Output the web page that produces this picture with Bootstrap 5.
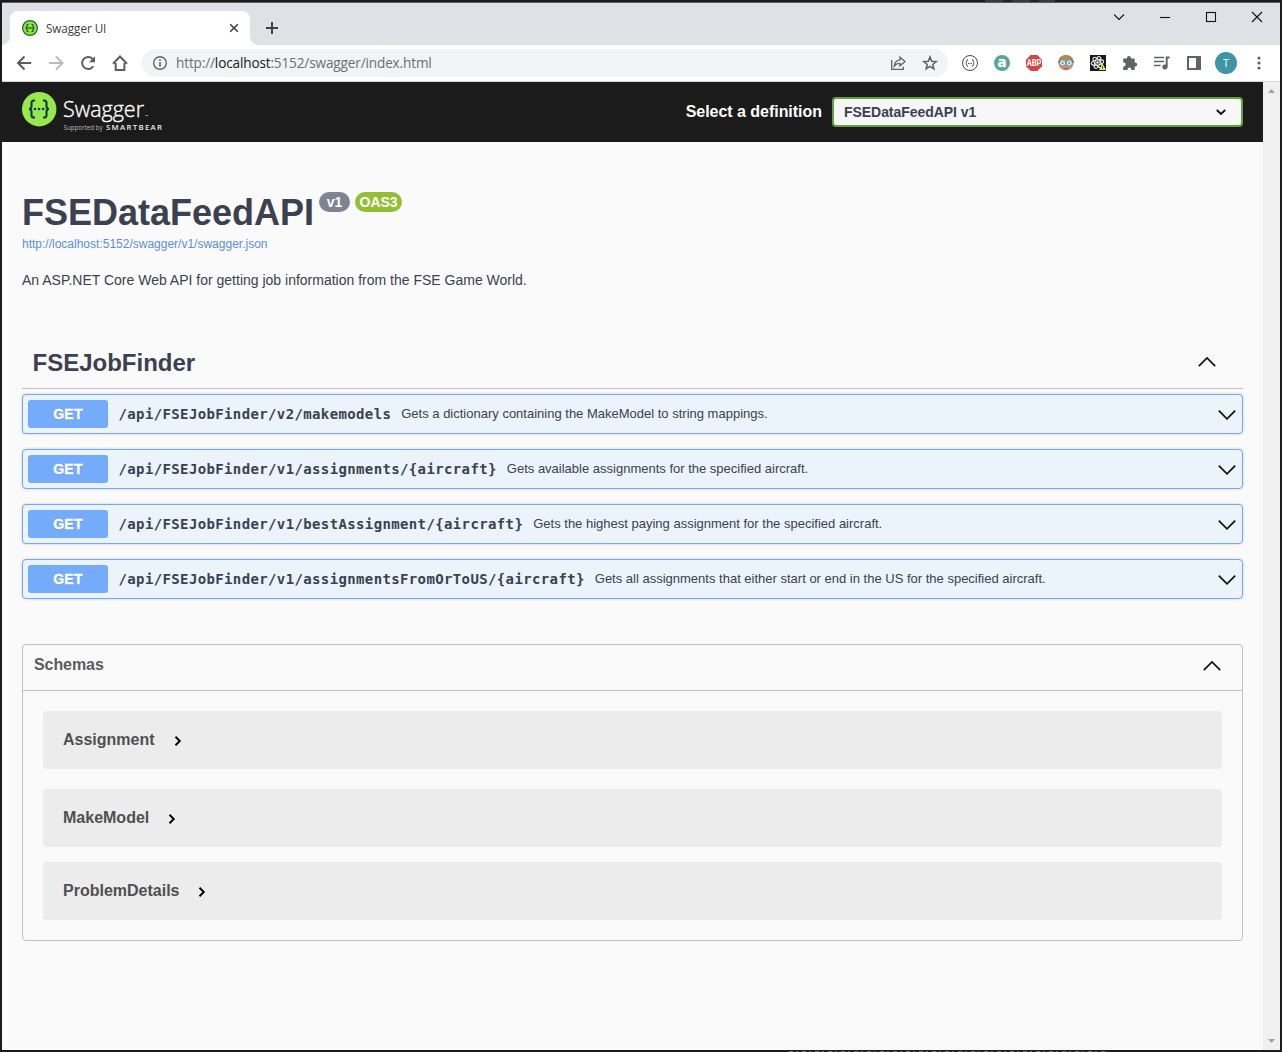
<!DOCTYPE html>
<html lang="en">
<head>
<meta charset="utf-8">
<title>Swagger UI</title>
<meta name="viewport" content="width=device-width, initial-scale=1">
<link href="https://cdn.jsdelivr.net/npm/bootstrap@5.3.0/dist/css/bootstrap.min.css" rel="stylesheet">
<style>
body{background:#1c1c1e;height:1052px;overflow:hidden;font-family:"Liberation Sans",Arial,sans-serif;color:#3b4151;font-size:14px;line-height:1.2}
svg{display:block;flex:none}
.desktop{width:1282px;height:1052px;padding:2px;position:relative}
/* slivers of the windows behind the browser */
.behind-top,.behind-bottom{position:absolute;height:1px}
.behind-top{left:985px;top:0;width:70px;height:2px;background:repeating-linear-gradient(90deg,#3a3a3c 0 18px,#222 18px 27px)}
.behind-bottom{left:789px;top:1051px;width:319px;background:repeating-linear-gradient(90deg,#777 0 4px,#2a2c30 4px 7px,#5d6b70 7px 9px,#222 9px 13px)}
.browser{height:1048px;background:#fafafa}
.tabstrip{height:43px;background:#dee1e6;border-top:1px solid #5d5e61;font-family:"Open Sans","Noto Sans",sans-serif}
.tab-active{width:240px;height:34px;margin:8px 0 0 8px;background:#fff;border-radius:8px 8px 0 0;padding:0 11px 0 12px;position:relative}
.tab-active::before,.tab-active::after{content:"";position:absolute;bottom:0;width:8px;height:8px}
.tab-active::before{left:-8px;background:radial-gradient(circle at 0 0,transparent 7.5px,#fff 8px)}
.tab-active::after{right:-8px;background:radial-gradient(circle at 100% 0,transparent 7.5px,#fff 8px)}
.tab-name{font-size:11.7px;color:#3c4043;margin-left:8px;letter-spacing:-.05px}
.winctl{margin:7px 16px 0 0}
.toolbar{height:37px;background:#fff;border-bottom:1px solid #d5d7da;padding:0 14px 0 14px;font-family:"Open Sans","Noto Sans",sans-serif}
.omnibox{width:806px;height:28px;border-radius:14px;background:#f1f3f4;margin-left:14px;padding:0 9px 0 10px}
.url{font-size:13.6px;letter-spacing:-.15px;color:#6b6f74;margin-left:8px;white-space:nowrap}
.url b{font-weight:400;color:#202124}
.avatar{width:22px;height:22px;background:#3d95a6;color:#fff;font-size:11px}
.viewport{height:968px}
.page{width:1261px}
.sb{width:17px;background:#f0f0f0;padding:7px 0 7px}
.topbar{height:60px;background:#1b1b1b;padding:0 20px}
.logo{font-family:"Open Sans",sans-serif}
.def-label{font-size:16px;font-weight:700;color:#fff;margin-right:10px;line-height:18px;letter-spacing:-.03px}
.def-select{width:411px;height:30px;border:2px solid #62a03f;border-radius:4px;background:#f7f7f7;font-size:14px;font-weight:700;padding:0 15px 0 10px;letter-spacing:-.05px}
.wrap{padding:0 20px}
.api-title{font-size:36px;font-weight:700;line-height:41px;height:41px;margin:50px 0 0;white-space:nowrap}
.pill{height:20px;border-radius:20px;color:#fff;font-weight:700;font-size:14px;line-height:20px;text-align:center}
.v1{width:31px;background:#7d8492;margin-left:5px}
.oas{width:47px;background:#93bf35;margin-left:5px}
.spec{font-size:12px;line-height:14px;color:#5d8ddc;text-decoration:none;margin-top:4px}
.desc{font-size:14px;line-height:16px;margin:21px 0 0}
.tag{height:50px;margin-top:51px;border-bottom:1px solid #bebfc4;padding:0 26px 2px 10.5px}
.tag h3{font-size:24px;font-weight:700;line-height:28px;margin:0}
.tag svg{margin-bottom:2px}
.ops{padding-top:5px;gap:15px}
.op{height:40px;border:1px solid #73aaf8;border-radius:4px;background:#ebf3fb;box-shadow:0 0 3px rgba(0,0,0,.19);padding:0 5px 0 5px}
.op svg{margin-top:2px}
.verb{width:80px;height:28px;background:#74abfa;border-radius:3px;color:#fff;font-size:14px;font-weight:700;text-align:center;line-height:28px;text-shadow:0 1px 0 rgba(0,0,0,.1);letter-spacing:.3px;-webkit-text-stroke:.3px #fff}
.path{font-family:"DejaVu Sans Mono","Liberation Mono",monospace;font-weight:700;font-size:14px;letter-spacing:.369px;line-height:18px;margin-left:10.5px;white-space:nowrap}
.sum{font-size:13px;line-height:16px;margin-left:10px;margin-top:-1px;white-space:nowrap}
.models{margin-top:45px;height:297px;border:1px solid #bfc0c4;border-radius:4px}
.models-head{height:46px;border-bottom:1px solid #bfc0c4;padding:0 20px 4px 11px}
.models-head h4{font-size:16px;font-weight:700;line-height:18px;margin:0 0 2px;color:#5a5b5f;letter-spacing:-.08px}
.model-list{padding:20px}
.model-row{height:58px;background:#ececec;border-radius:4px;padding:0 20px;font-size:16px;font-weight:700;color:#505050;line-height:18px}
.model-row svg{margin:2px 0 0 19px}
</style>
</head>
<body>
<svg width="0" height="0" class="position-absolute">
  <symbol id="down" viewBox="0 0 20 12"><path d="M1.800 1.700 10 9.800l8.200-8.100" fill="none" stroke="#111" stroke-width="1.700"/></symbol>
  <symbol id="up" viewBox="0 0 20 12"><path d="M1.800 10.100 10 2l8.200 8.100" fill="none" stroke="#111" stroke-width="1.700"/></symbol>
  <symbol id="right" viewBox="0 0 8 10"><path d="M1.500 .800 5.800 5 1.500 9.200" fill="none" stroke="#000" stroke-width="1.900"/></symbol>
  <symbol id="braces" viewBox="0 0 34 34"><path d="M13 8.500h-1.200c-1.700 0-2.300 1-2.300 2.600v3c0 1.700-.8 2.900-2.500 2.900 1.700 0 2.500 1.200 2.500 2.900v3c0 1.600.6 2.600 2.300 2.600H13M21 8.500h1.200c1.700 0 2.300 1 2.300 2.600v3c0 1.700.8 2.900 2.500 2.900-1.700 0-2.500 1.200-2.500 2.900v3c0 1.600-.6 2.600-2.300 2.600H21" fill="none" stroke="currentColor" stroke-width="2.100"/><g fill="currentColor"><circle cx="12.900" cy="17" r="1.350"/><circle cx="17" cy="17" r="1.350"/><circle cx="21.100" cy="17" r="1.350"/></g></symbol>
</svg>
<div class="desktop">
<div class="behind-top"></div><div class="behind-bottom"></div>
<div class="browser d-flex flex-column">
  <div class="tabstrip d-flex justify-content-between align-items-start">
    <div class="d-flex">
      <div class="tab-active d-flex align-items-center">
        <svg width="16" height="16" viewBox="0 0 16 16" color="#1d3b2b"><circle cx="8" cy="8" r="7.400" fill="#85ea2d" stroke="#2c5a54" stroke-width="1.200"/><path d="M6.600 4.300C4.600 4.300 5 5.300 5 6.500 5 7.400 4.600 8 3.600 8 4.600 8 5 8.600 5 9.500c0 1.200-.4 2.200 1.600 2.200M9.400 4.300c2 0 1.600 1 1.600 2.200 0 .9.400 1.500 1.400 1.500-1 0-1.400.6-1.400 1.500 0 1.200.4 2.200-1.600 2.200M5.500 8h5" fill="none" stroke="currentColor" stroke-width="1.100"/></svg>
        <span class="tab-name">Swagger UI</span>
        <svg class="ms-auto" width="10" height="10" viewBox="0 0 10 10"><path d="M1.200 1.200l7.600 7.600M8.800 1.200 1.200 8.800" stroke="#3c4043" stroke-width="1.600"/></svg>
      </div>
      <svg style="margin:19px 0 0 16px" width="12" height="12" viewBox="0 0 12 12"><path d="M6 0v12M0 6h12" stroke="#3c4043" stroke-width="2"/></svg>
    </div>
    <svg class="winctl" width="150" height="14" viewBox="0 0 150 14" fill="none" stroke="#111" stroke-width="1.100"><path d="M0 4.500 5 9.500 10 4.500"/><path d="M46 7.500h10"/><rect x="92.500" y="2.500" width="9" height="9"/><path d="M138 2l10 10M148 2l-10 10"/></svg>
  </div>

  <div class="toolbar d-flex align-items-center">
    <svg width="112" height="16" viewBox="0 0 112 16" fill="none" stroke="#5b5e63" stroke-width="2">
      <path d="M15.200 8H2.800M8.500 1.500 2 8l6.500 6.500"/>
      <path d="M33 8h12.500M40 1.500 46.500 8 40 14.500" stroke="#b9bbbd"/>
      <path d="M77.200 11.200A6 6 0 1 1 76.400 3.800L78 5.400"/><path d="M79 1.200v6h-6z" fill="#5b5e63" stroke="none"/>
      <path d="M99.700 8v7h8.700V8M97 8.700l7-7.200 7 7.200" />
    </svg>
    <div class="omnibox d-flex align-items-center">
      <svg width="16" height="16" viewBox="0 0 16 16"><circle cx="8" cy="8" r="6.300" fill="none" stroke="#5f6368" stroke-width="1.400"/><path d="M8 7v4.600M8 4.300v1.600" stroke="#5f6368" stroke-width="1.600"/></svg>
      <span class="url">http://<b>localhost</b>:5152/swagger/index.html</span>
      <svg class="ms-auto" width="50" height="16" viewBox="0 0 50 16" fill="none" stroke="#5f6368" stroke-width="1.300"><path d="M2.700 5v9.300h11.600v-2.600"/><path d="M11 2.200 16 6.500 11 10.800V8.300C8.300 8.300 6.500 9.200 5.200 11 5.600 7.500 7.700 5.200 11 4.800z"/><path d="M41 1.900l1.700 4.300 4.500.3-3.500 2.900 1.200 4.500-3.900-2.500-3.900 2.500 1.200-4.500-3.500-2.900 4.500-.3z" stroke-width="1.500"/></svg>
    </div>
    <svg style="margin-left:14px" width="240" height="18" viewBox="0 0 240 18">
      <g fill="none" stroke="#4b4b4b"><circle cx="8" cy="9" r="7.500"/><path d="M6 5.500c-2 0-.8 3.500-2.200 3.500 1.400 0 .2 3.500 2.200 3.500M10 5.500c2 0 .8 3.500 2.200 3.500-1.400 0-.2 3.500-2.200 3.500"/><path d="M6 9.500h4" stroke-dasharray="1 .6"/></g>
      <circle cx="40" cy="9" r="8" fill="#59a598"/><text x="40" y="13.200" text-anchor="middle" font-family="Open Sans" font-weight="700" font-size="15" fill="#fff" stroke="#fff" stroke-width=".4">a</text>
      <path d="M68.700 1h6.600L80 5.700v6.600L75.300 17h-6.600L64 12.300V5.700z" fill="#d04545"/><text x="64.700" y="12.200" font-family="Roboto" font-weight="700" font-size="9" fill="#fff" textLength="14.600" lengthAdjust="spacingAndGlyphs">ABP</text>
      <circle cx="104" cy="9" r="7.600" fill="#c99576"/><path d="M96.400 8C96.500 3 100 1 104 1s7.500 2 7.600 7l-3-2.500h-9z" fill="#a78a58"/><path d="M96 8h16" stroke="#58717e" stroke-width="1.500"/><circle cx="100.700" cy="9" r="3" fill="#d9eff5" stroke="#73949f"/><circle cx="107.300" cy="9" r="3" fill="#d9eff5" stroke="#73949f"/><path d="M100 9h1.500M106.500 9h1.500" stroke="#396c88" stroke-width="1.500"/><path d="M102 14.500h4" stroke="#946152"/>
      <path d="M128 1h16v16h-16z" fill="#181818"/><g fill="none" stroke="#eee" stroke-width="1.100"><ellipse cx="135.500" cy="8.500" rx="6.200" ry="2.600" transform="rotate(-10 135.500 8.500)"/><ellipse cx="135.500" cy="8.500" rx="6.200" ry="2.600" transform="rotate(50 135.500 8.500)"/><ellipse cx="135.500" cy="8.500" rx="6.200" ry="2.600" transform="rotate(110 135.500 8.500)"/></g><circle cx="135.500" cy="8.500" r="1.200" fill="#fff"/><path d="M140.500 9.500l3.500 6.500h-7z" fill="#f1e65b"/><path d="M140.500 12v2.800" stroke="#564d20"/>
      <path d="M161 4.500h3.200V4a2 2 0 0 1 4 0v.5h3.800v4h.5a2 2 0 0 1 0 4h-.5V16h-3.400v-.5a1.900 1.900 0 0 0-3.800 0v.5H160.500v-3.600h.6a1.900 1.900 0 0 0 0-3.800h-.6V4.500z" fill="#5f6368" transform="translate(.7 0)"/>
      <path d="M192 3.500h10M192 7.500h10M192 11.500h6.500" stroke="#5f6368" stroke-width="1.600"/><path d="M204.700 13V3.500h3" fill="none" stroke="#5f6368" stroke-width="1.900"/><circle cx="202.900" cy="13" r="2.500" fill="#5f6368"/>
      <path d="M226 3h12v12h-12z" fill="none" stroke="#5f6368" stroke-width="2"/><path d="M234 2h5v14h-5z" fill="#5f6368"/>
    </svg>
    <div class="avatar rounded-circle d-flex align-items-center justify-content-center flex-shrink-0" style="margin-left:13px">T</div>
    <svg style="margin-left:20px" width="4" height="14" viewBox="0 0 4 14" fill="#5f6368"><circle cx="2" cy="2" r="1.600"/><circle cx="2" cy="7" r="1.600"/><circle cx="2" cy="12" r="1.600"/></svg>
  </div>

  <div class="viewport d-flex">
    <main class="page">
      <header class="topbar d-flex align-items-center">
        <svg class="logo" width="144" height="44" viewBox="0 0 144 44">
          <circle cx="17.200" cy="19.200" r="17.200" fill="#97e84c"/><use href="#braces" x="0" y="2" width="34" height="34" color="#173647"/>
          <text x="41" y="26.500" font-size="22" font-weight="300" fill="#fff" stroke="#fff" stroke-width=".35" textLength="81" lengthAdjust="spacingAndGlyphs">Swagger</text><path d="M123.500 25.500h2.500" stroke="#999"/>
          <text x="41.500" y="40" font-size="6.500" fill="#bbb" textLength="39" lengthAdjust="spacingAndGlyphs">Supported by</text>
          <text x="84" y="40" font-size="7.800" font-weight="600" fill="#eee" textLength="56" lengthAdjust="spacing">SMARTBEAR</text>
        </svg>
        <label class="def-label ms-auto">Select a definition</label>
        <div class="def-select d-flex align-items-center justify-content-between"><span>FSEDataFeedAPI v1</span>
          <svg width="10" height="7" viewBox="0 0 10 7"><path d="M.8 1 5 5l4.200-4" fill="none" stroke="#111" stroke-width="1.900"/></svg>
        </div>
      </header>
      <div class="wrap">
        <h1 class="api-title d-flex align-items-start"><span class="title-text">FSEDataFeedAPI</span><span class="pill v1">v1</span><span class="pill oas">OAS3</span></h1>
        <a class="spec d-block" href="#">http://localhost:5152/swagger/v1/swagger.json</a>
        <p class="desc">An ASP.NET Core Web API for getting job information from the FSE Game World.</p>

        <div class="tag d-flex align-items-center justify-content-between"><h3>FSEJobFinder</h3><svg width="20" height="12"><use href="#up"/></svg></div>
        <div class="ops d-flex flex-column">
          <div class="op d-flex align-items-center"><span class="verb">GET</span><span class="path">/api/FSEJobFinder/v2/makemodels</span><span class="sum">Gets a dictionary containing the MakeModel to string mappings.</span><svg class="ms-auto" width="20" height="12"><use href="#down"/></svg></div>
          <div class="op d-flex align-items-center"><span class="verb">GET</span><span class="path">/api/FSEJobFinder/v1/assignments/{aircraft}</span><span class="sum">Gets available assignments for the specified aircraft.</span><svg class="ms-auto" width="20" height="12"><use href="#down"/></svg></div>
          <div class="op d-flex align-items-center"><span class="verb">GET</span><span class="path">/api/FSEJobFinder/v1/bestAssignment/{aircraft}</span><span class="sum">Gets the highest paying assignment for the specified aircraft.</span><svg class="ms-auto" width="20" height="12"><use href="#down"/></svg></div>
          <div class="op d-flex align-items-center"><span class="verb">GET</span><span class="path">/api/FSEJobFinder/v1/assignmentsFromOrToUS/{aircraft}</span><span class="sum">Gets all assignments that either start or end in the US for the specified aircraft.</span><svg class="ms-auto" width="20" height="12"><use href="#down"/></svg></div>
        </div>

        <section class="models">
          <div class="models-head d-flex align-items-center justify-content-between"><h4>Schemas</h4><svg width="20" height="12"><use href="#up"/></svg></div>
          <div class="model-list">
            <div class="model-row d-flex align-items-center">Assignment<svg width="8" height="10"><use href="#right"/></svg></div>
            <div class="model-row d-flex align-items-center" style="margin-top:20px">MakeModel<svg width="8" height="10"><use href="#right"/></svg></div>
            <div class="model-row d-flex align-items-center" style="margin-top:15px">ProblemDetails<svg width="8" height="10"><use href="#right"/></svg></div>
          </div>
        </section>
      </div>
    </main>
    <div class="sb d-flex flex-column justify-content-between align-items-center">
      <svg width="7" height="4" viewBox="0 0 7 4"><path d="M0 4 3.500 0 7 4z" fill="#a3a3a3"/></svg>
      <svg width="7" height="4" viewBox="0 0 7 4"><path d="M0 0 3.500 4 7 0z" fill="#a3a3a3"/></svg>
    </div>
  </div>
</div>
</div>
<script src="https://cdn.jsdelivr.net/npm/bootstrap@5.3.0/dist/js/bootstrap.bundle.min.js"></script>
</body>
</html>
